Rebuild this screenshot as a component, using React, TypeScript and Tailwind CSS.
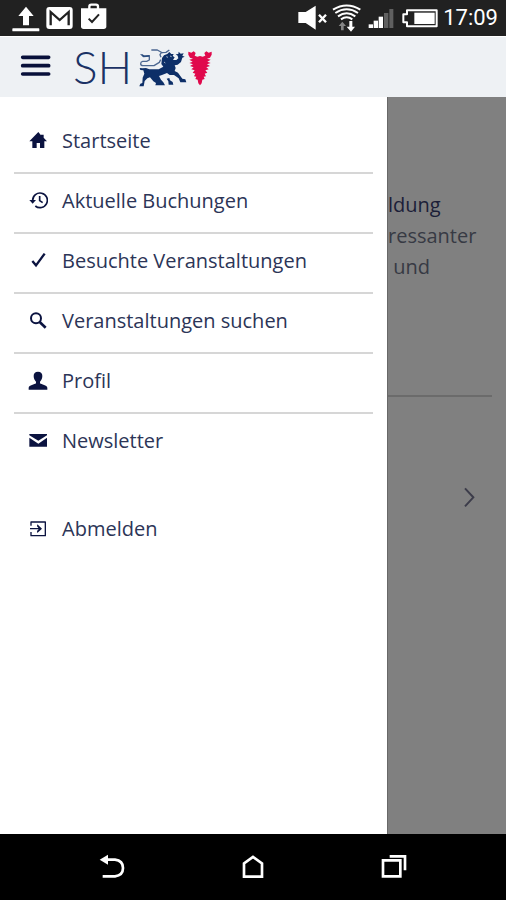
import type { ReactNode } from 'react';

type MenuEntry = {
  label: string;
  icon: ReactNode;
};

const INK = '#0b1340';

const Glyph = ({ children }: { children: ReactNode }) => (
  <svg viewBox="0 0 60 60" className="h-5 w-5 shrink-0" fill={INK} aria-hidden="true">
    {children}
  </svg>
);

const HomeGlyph = () => (
  <Glyph>
    <path d="M31 3 4 31h9v20h13V36h10v15h13V31h8L47 20v-9h-8v2Z" />
  </Glyph>
);

const HistoryGlyph = () => (
  <Glyph>
    <path
      d="M14 28A22 22 0 1 1 22 45M35 15v14l9 6"
      fill="none"
      stroke={INK}
      strokeWidth="5"
    />
    <path d="M4 27h20L14 38Z" />
  </Glyph>
);

const CheckGlyph = () => (
  <Glyph>
    <path d="M13 30l11 13L50 8" fill="none" stroke={INK} strokeWidth="7" />
  </Glyph>
);

const SearchGlyph = () => (
  <Glyph>
    <circle cx="24" cy="22" r="15" fill="none" stroke={INK} strokeWidth="6" />
    <path d="m35 33 18 17" fill="none" stroke={INK} strokeWidth="8" />
  </Glyph>
);

const PersonGlyph = () => (
  <Glyph>
    <path d="M30 2c9 0 13 5 13 13 0 8-3 13-7 17v5c4 4 21 5 22 13v6H2v-6c1-8 18-9 22-13v-5c-4-4-7-9-7-17C17 7 21 2 30 2Z" />
  </Glyph>
);

const MailGlyph = () => (
  <Glyph>
    <path d="M4 9h53v4L31 29 4 13Z" />
    <path d="m4 20 27 18 26-18v27H4Z" />
  </Glyph>
);

const ExitGlyph = () => (
  <Glyph>
    <path
      d="M9 20V9h43v41H9V39M6 29h30"
      fill="none"
      stroke={INK}
      strokeWidth="4"
      strokeLinejoin="round"
    />
    <path d="m28 16 14 13-14 13-1-6 6-7-6-7Z" />
  </Glyph>
);

const MAIN_ENTRIES: MenuEntry[] = [
  { label: 'Startseite', icon: <HomeGlyph /> },
  { label: 'Aktuelle Buchungen', icon: <HistoryGlyph /> },
  { label: 'Besuchte Veranstaltungen', icon: <CheckGlyph /> },
  { label: 'Veranstaltungen suchen', icon: <SearchGlyph /> },
  { label: 'Profil', icon: <PersonGlyph /> },
  { label: 'Newsletter', icon: <MailGlyph /> },
];

const LOGOUT_ENTRY: MenuEntry = { label: 'Abmelden', icon: <ExitGlyph /> };

const MenuLink = ({ label, icon }: MenuEntry) => (
  <a href="#" className="flex h-[58px] items-center gap-[14px] pb-1 pl-[14px]">
    {icon}
    <span>{label}</span>
  </a>
);

const StatusBar = () => (
  <div className="flex h-9 items-center justify-between bg-[#212121] pl-3 pr-2 text-white">
    <div className="flex items-center gap-[5px]">
      <svg viewBox="36 6 84 96" className="h-8 w-7" fill="white" aria-hidden="true">
        <path d="M78 20 101 48H87v28H69V48H55Z" />
        <rect x="37" y="85" width="81" height="9" rx="2" />
      </svg>
      <svg viewBox="135 6 87 96" className="h-8 w-[29px]" aria-hidden="true">
        <rect x="139" y="21" width="79" height="66" rx="9" fill="white" />
        <path
          d="M152 76V36l27 24 27-24v40"
          fill="none"
          stroke="#212121"
          strokeWidth="7"
        />
      </svg>
      <svg viewBox="237 6 87 96" className="h-8 w-[29px]" aria-hidden="true">
        <path
          d="M268 27V20q0-6 6-6h14q6 0 6 6v7"
          fill="none"
          stroke="white"
          strokeWidth="7"
        />
        <path d="M243 25h76v54q0 8-8 8h-60q-8 0-8-8Z" fill="white" />
        <path d="m266 56 10 10 21-23" fill="none" stroke="#212121" strokeWidth="6" />
      </svg>
    </div>
    <div className="flex items-center gap-[5px]">
      <svg viewBox="21 6 87 96" className="h-8 w-[29px]" fill="white" aria-hidden="true">
        <path d="M22 36h22l30-19v72L44 69H22Z" />
        <path d="m84 44 21 23m0-23L84 67" stroke="white" strokeWidth="7" />
      </svg>
      <svg viewBox="123 6 87 96" className="h-8 w-[29px]" fill="none" aria-hidden="true">
        <path
          d="M126 29q41-25 82 0M133 39q34-22 68 0M141 49q26-18 52 0M150 58q17-12 34 0"
          stroke="white"
          strokeWidth="6"
        />
        <path d="m154 65 11 13h-7v13h-8V78h-7Z" fill="#858585" />
        <path d="M175 63h9v17h8l-12 15-13-15h8Z" fill="white" />
      </svg>
      <svg viewBox="225 6 84 96" className="h-8 w-7" fill="white" aria-hidden="true">
        <rect x="233" y="73" width="13" height="11" />
        <rect x="248" y="62" width="13" height="22" />
        <rect x="263" y="50" width="13" height="34" />
        <rect x="279" y="39" width="13" height="45" fill="#606060" />
        <rect x="295" y="27" width="12" height="57" fill="#606060" />
      </svg>
      <svg viewBox="324 6 117 96" className="h-8 w-[39px]" aria-hidden="true">
        <path
          d="M348 31h89v48h-89V67h-11V43h11Z"
          fill="none"
          stroke="white"
          strokeWidth="6"
          strokeLinejoin="round"
        />
        <rect x="370" y="38" width="61" height="34" fill="white" />
      </svg>
      <time className="font-['Roboto'] text-[22px] leading-8">17:09</time>
    </div>
  </div>
);

// Schleswig-Holstein mark: blue lion next to the red nettle leaf
const StateMark = () => (
  <svg
    viewBox="39 34 225 120"
    className="h-10 w-[75px]"
    role="img"
    aria-label="Schleswig-Holstein"
  >
    <g transform="translate(33 27)">
      <g fill="none" stroke="#4c6791" strokeWidth="4" strokeLinejoin="round">
        <path d="M46 16h18l16 9M100 16l-10 7-14 1-4 6 3 8M20 34l20-1V46L32 50H20q-6 1-6 7t8 6h32l16-10 4-8" />
      </g>
      <path d="M12 29h8l6 5 14-3v5l-18 2Z" fill="#2b4e80" />
      <path
        d="M78 40l6-8 10-4 6-6 6 6 7 0-3 6 6 4-5 8 10 0 6-5-2-8-6-4 8-1 1-7 6 6 9-1-4 7 7 3-7 3-4 13-10 8-9 2 3 8-3 9 10 5 7 10 6 8 9 2 3 9h-18l-5-12-14-10-13 0-8-6-15 6-9 3 6 11 7 8 5 9H58l2-7-8-5-10-12-8 3-8 8-3 16H10l3-8 6-2 1-16 5-12-3-10-9-1-2-6 9 1 10-1 10 4h28l14-8-6-8Z"
        fill="#0d2f68"
      />
      <path d="M92 102l8-2 2 7 8 5 2 8H98l-1-10Z" fill="#0d2f68" />
      <path d="m91 36 5 2m6-4 5 2M84 52l4 3" stroke="#eef1f4" strokeWidth="2" />
    </g>
    <path
      d="M190 48l9 3 7-4 6 5-3 8 8 3 8-2 8 2 8-3-3-8 6-5 7 4 9-3v9l-5 9-9 3 11 3-10 6 10 4-11 4 9 5-11 4 7 6-10 3 6 7-8 3 4 8-7 1 3 7-7 2-2 11-5 6-5-6-2-11-7-2 3-7-7-1 4-8-8-3 6-7-10-3 7-6-11-4 9-5-11-4 10-4-10-6 11-3-9-3-5-9Z"
      fill="#e0094c"
    />
  </svg>
);

const AppHeader = () => (
  <header className="flex h-[61px] items-center border-t border-white bg-[#eef1f4] pl-5">
    <button type="button" aria-label="Menü" className="pb-1">
      <svg
        viewBox="60 156 93 78"
        className="h-[26px] w-[31px]"
        stroke="#08103a"
        strokeWidth="11"
        strokeLinecap="round"
        aria-hidden="true"
      >
        <path d="M68 172h78M68 197h78M68 222h78" />
      </svg>
    </button>
    <div className="flex items-center pl-[22px]">
      <span className="w-[65px] font-['Lato'] text-[46px] font-light leading-[56px] text-[#1b3265]">
        SH
      </span>
      <StateMark />
    </div>
  </header>
);

const DimmedPage = () => (
  <main className="flex-1 overflow-hidden border-l border-[#686868] bg-[#808080] pt-[92px]">
    <p className="whitespace-pre leading-[31px] text-[#373a44]">
      <span className="text-[#1b1e38]">ldung</span>
      <br />
      ressanter
      <br />
      {' und'}
    </p>
    <hr className="mr-[14px] mt-[113px] border-t-2 border-[#6b6b6b]" />
    <div className="mt-[84px] flex justify-end pr-[30px]">
      <button type="button" aria-label="Weiter">
        <svg viewBox="0 0 42 96" className="h-8 w-[14px]" aria-hidden="true">
          <path d="m9 22 25 27L9 76" fill="none" stroke="#3c3c4a" strokeWidth="6" />
        </svg>
      </button>
    </div>
  </main>
);

const NavigationBar = () => (
  <nav className="grid h-[66px] grid-cols-3 place-items-center bg-black px-[42px]">
    <button type="button" aria-label="Zurück">
      <svg viewBox="60 102 78 78" className="h-[26px] w-[26px]" aria-hidden="true">
        <path
          d="M80 119h28q24 3 24 25t-24 25H71"
          fill="none"
          stroke="white"
          strokeWidth="8"
        />
        <path d="M62 119l25-15v30Z" fill="white" />
      </svg>
    </button>
    <button type="button" aria-label="Startbildschirm">
      <svg viewBox="482 102 78 78" className="h-[26px] w-[26px]" aria-hidden="true">
        <path d="M494 170v-40l27-19 27 19v40Z" fill="none" stroke="white" strokeWidth="8" />
      </svg>
    </button>
    <button type="button" aria-label="Letzte Apps">
      <svg viewBox="124 102 78 78" className="h-[26px] w-[26px]" aria-hidden="true">
        <path
          d="M130 121h52v48h-52ZM150 109h46v42"
          fill="none"
          stroke="white"
          strokeWidth="8"
        />
      </svg>
    </button>
  </nav>
);

export default function App() {
  return (
    <div className="flex min-h-screen flex-col bg-white font-['Open_Sans',sans-serif] text-[20px]">
      <StatusBar />
      <AppHeader />
      <div className="flex flex-1">
        <aside className="w-[387px] shrink-0 bg-white px-[14px] pt-[17px] text-[#2c3557]">
          <ul className="divide-y-2 divide-[#d6d6d6]">
            {MAIN_ENTRIES.map((entry) => (
              <li key={entry.label}>
                <MenuLink {...entry} />
              </li>
            ))}
          </ul>
          <div className="mt-[30px]">
            <MenuLink {...LOGOUT_ENTRY} />
          </div>
        </aside>
        <DimmedPage />
      </div>
      <NavigationBar />
    </div>
  );
}
